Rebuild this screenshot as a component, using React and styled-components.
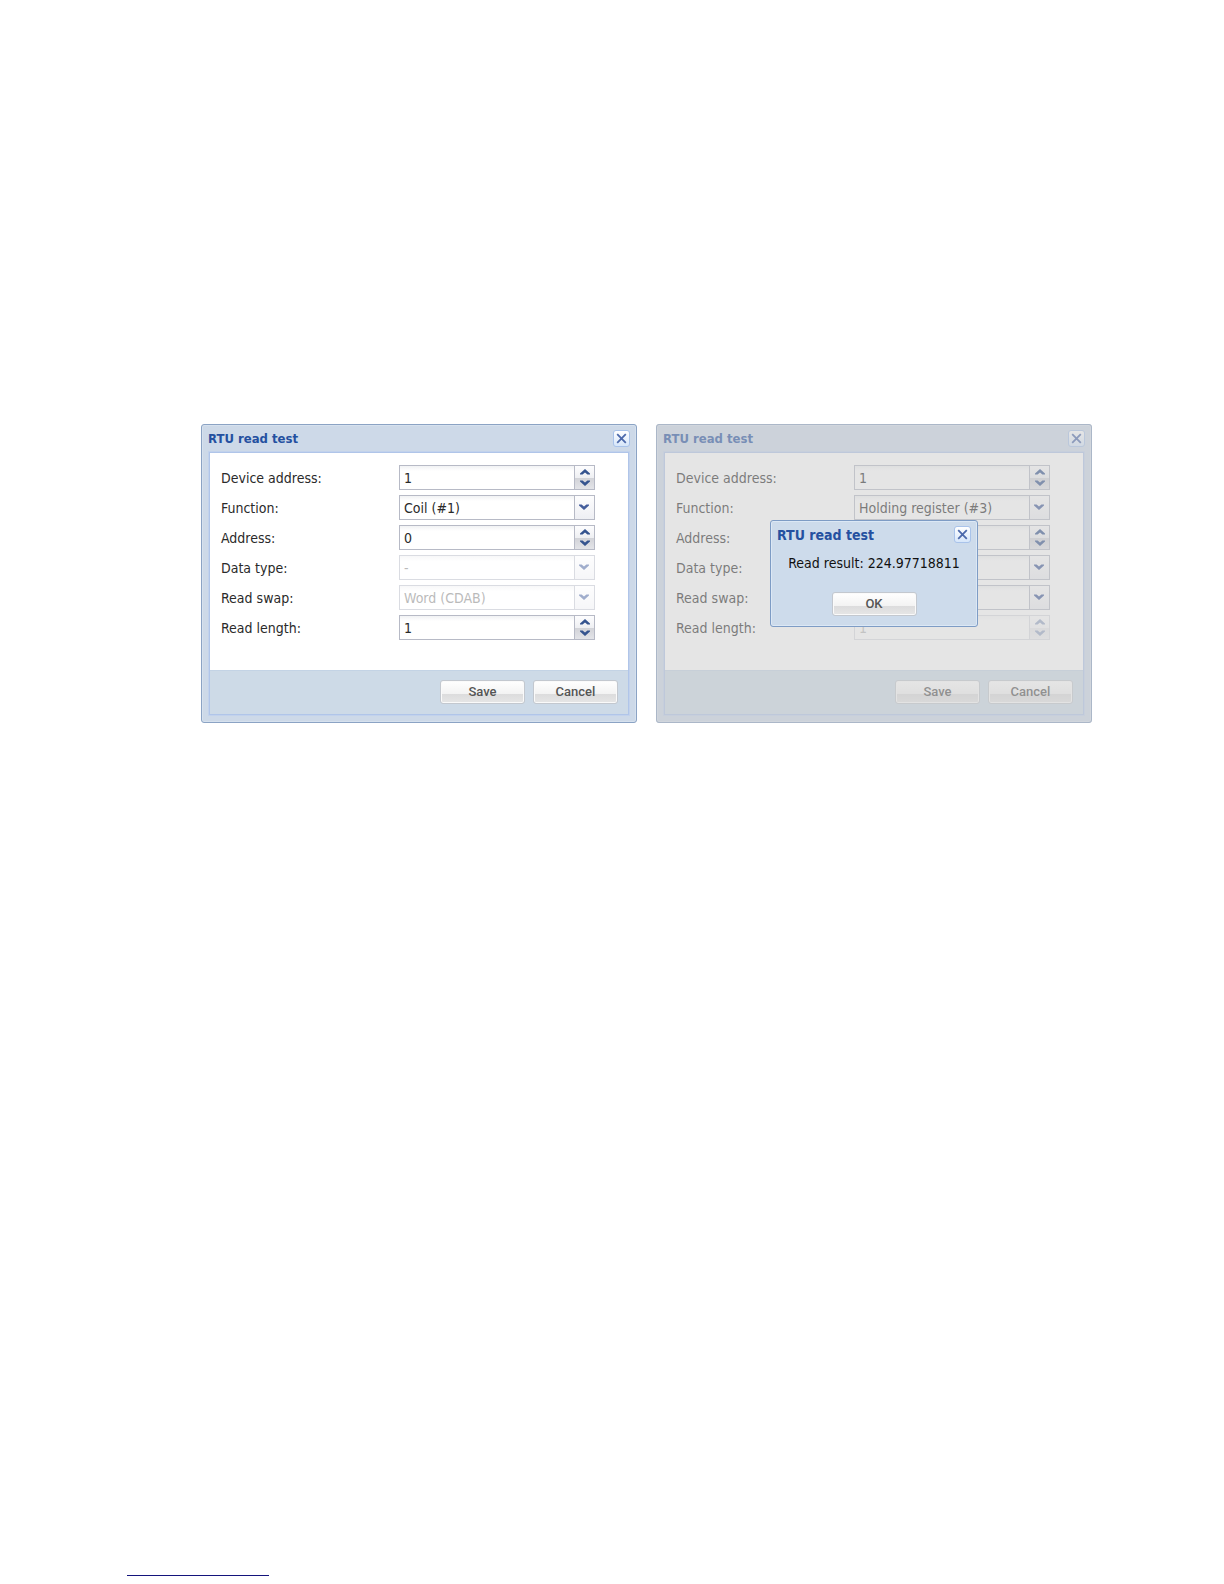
import React, { useId, useState } from "react";
import styled, { createGlobalStyle, css } from "styled-components";

const uiFont = '"DejaVu Sans Condensed", "DejaVu Sans", Tahoma, sans-serif';

const GlobalStyle = createGlobalStyle`
  *, *::before, *::after { box-sizing: border-box; }
  body { margin: 0; background: #fff; }
  button, input, select { margin: 0; font: inherit; }
`;

const Page = styled.div`
  min-height: 100vh;
  display: flex;
  flex-direction: column;
  font-family: ${uiFont};
  font-size: 14px;
  color: #2a2a2a;
`;

const Windows = styled.main`
  flex: 1;
  display: grid;
  grid-template-columns: 1fr 1fr;
  align-items: start;
  gap: 19px;
  padding: 424px 132px 48px 201px;

  @media (max-width: 1000px) {
    grid-template-columns: minmax(0, 436px);
    padding: 48px 24px;
  }
`;

const Footer = styled.footer`
  padding: 0 127px 8px;
`;

const FootRule = styled.hr`
  width: 142px;
  height: 1px;
  margin: 0;
  border: 0;
  background: #14147c;
`;

const Frame = styled.section`
  position: relative;
  padding: 0 7px 7px;
  border: 1px solid #8ba3c4;
  border-radius: 3px;
  background: #cdd9e8;
  box-shadow: inset 0 0 0 1px #d6e1ee;
`;

const TitleBar = styled.header`
  display: flex;
  align-items: center;
  justify-content: space-between;
  height: 27px;
  margin: 0 -1px;
`;

const Title = styled.h2`
  margin: 0;
  color: #2450a0;
  font-size: ${(p) => (p.$large ? "14px" : "13px")};
  line-height: 20px;
  font-weight: 700;
`;

const CloseButton = styled.button`
  display: flex;
  align-items: center;
  justify-content: center;
  width: 17px;
  height: 17px;
  padding: 0;
  border: 1px solid #a9c3ea;
  border-radius: 3px;
  background: linear-gradient(#fff, #d6e6fa);
  color: #4c69ab;
`;

const Panel = styled.form`
  border: 1px solid #b0c5e9;
  box-shadow: 0 0 0 1px #c2d2ec;
  background: #fff;
`;

const Fields = styled.div`
  display: flex;
  flex-direction: column;
  gap: 5px;
  padding: 12px 33px 30px 11px;
`;

const Row = styled.div`
  display: grid;
  grid-template-columns: 178px minmax(0, 1fr);
  align-items: center;
`;

const Label = styled.label`
  line-height: 24px;
`;

const Control = styled.div`
  position: relative;
  display: flex;
  height: 25px;
  border: 1px solid #b7bac6;
  background: linear-gradient(#f1f2f4, #fff 5px);
  opacity: ${(p) => (p.$disabled ? 0.5 : 1)};
`;

const entry = css`
  flex: 1;
  width: 100%;
  min-width: 0;
  padding: 0 4px;
  border: 0;
  border-radius: 0;
  background: transparent;
  color: ${(p) => (p.disabled ? "#777" : "#2a2a2a")};
  opacity: 1;
  appearance: none;
`;

const TextBox = styled.input`
  ${entry}
`;

const DropDown = styled.select`
  ${entry}
  padding-right: 24px;
`;

const Trigger = styled.span`
  position: absolute;
  inset: 0 0 0 auto;
  display: flex;
  align-items: center;
  justify-content: center;
  width: 20px;
  padding: 0 2px 2px 0;
  border-left: 1px solid #b7bac6;
  background: linear-gradient(#fdfdfe, #eeeff3);
  color: #435d9b;
  pointer-events: none;
`;

const Spinner = styled.span`
  display: flex;
  flex-direction: column;
  width: 20px;
  border-left: 1px solid #b7bac6;
`;

const StepButton = styled.button`
  flex: 1;
  display: flex;
  align-items: center;
  justify-content: center;
  padding: 0;
  border: 0;
  background: ${(p) => (p.$down ? "linear-gradient(#d2d3d8, #e3e4e8)" : "linear-gradient(#fdfdfe, #eeeff2)")};
  color: #35548f;
`;

const Toolbar = styled.footer`
  display: flex;
  justify-content: flex-end;
  gap: 8px;
  padding: 9px 10px 10px;
  border-top: 1px solid #c3d3e5;
  background: #cddae7;
`;

const PushButton = styled.button`
  width: 85px;
  height: 24px;
  padding: 0;
  border: 1px solid #c3c8cf;
  border-radius: 3px;
  background: linear-gradient(#fff, #f3f3f3 58%, #dcdcdd 60%, #e6e6e6);
  box-shadow: inset 0 0 0 1px #fafafa;
  color: #555;
  font-family: Roboto, "Liberation Sans", sans-serif;
  font-size: 13px;
  font-weight: 500;
  line-height: 20px;
`;

const Mask = styled.div`
  position: absolute;
  inset: -1px;
  display: grid;
  place-items: center;
  border-radius: 3px;
  background: rgba(204, 204, 204, 0.5);
`;

const MessageBox = styled.section`
  width: 208px;
  height: 107px;
  padding: 0 7px 10px;
  border: 1px solid #7e9cc5;
  border-radius: 3px;
  background: #cddbeb;
  box-shadow: inset 0 0 0 1px #dce8f5;
`;

const Message = styled.p`
  margin: 0;
  padding: 5px 0 19px;
  color: #111;
  line-height: 20px;
  text-align: center;
`;

const MessageActions = styled.div`
  display: flex;
  justify-content: center;
`;

function CloseIcon() {
  return (
    <svg width="11" height="11" viewBox="0 0 11 11" aria-hidden="true">
      <path d="M1.2 1.2 9.8 9.8M9.8 1.2 1.2 9.8" fill="none" stroke="currentColor" strokeWidth="1.8" />
    </svg>
  );
}

function Chevron({ up }) {
  return (
    <svg width="10" height="6" viewBox="0 0 10 6" aria-hidden="true">
      <path
        d={up ? "M5 0 10 4.4V5.6H7.4L5 3.4 2.6 5.6H0V4.4Z" : "M5 6 10 1.6V.4H7.4L5 2.6 2.6.4H0V1.6Z"}
        fill="currentColor"
      />
    </svg>
  );
}

function NumberField({ label, value, disabled }) {
  const id = useId();
  const [current, setCurrent] = useState(value);
  const step = (by) => setCurrent(String(Number(current) + by));
  return (
    <Row>
      <Label htmlFor={id}>{label}</Label>
      <Control $disabled={disabled}>
        <TextBox id={id} inputMode="numeric" value={current} disabled={disabled} onChange={(e) => setCurrent(e.target.value)} />
        <Spinner>
          <StepButton type="button" aria-label={`Increase ${label}`} disabled={disabled} onClick={() => step(1)}>
            <Chevron up />
          </StepButton>
          <StepButton type="button" $down aria-label={`Decrease ${label}`} disabled={disabled} onClick={() => step(-1)}>
            <Chevron />
          </StepButton>
        </Spinner>
      </Control>
    </Row>
  );
}

function SelectField({ label, value, disabled }) {
  const id = useId();
  return (
    <Row>
      <Label htmlFor={id}>{label}</Label>
      <Control $disabled={disabled}>
        <DropDown id={id} disabled={disabled} defaultValue={value}>
          <option value={value}>{value}</option>
        </DropDown>
        <Trigger><Chevron /></Trigger>
      </Control>
    </Row>
  );
}

const initialFields = [
  { label: "Device address:", kind: "number", value: "1" },
  { label: "Function:", kind: "select", value: "Coil (#1)" },
  { label: "Address:", kind: "number", value: "0" },
  { label: "Data type:", kind: "select", value: "-", disabled: true },
  { label: "Read swap:", kind: "select", value: "Word (CDAB)", disabled: true },
  { label: "Read length:", kind: "number", value: "1" },
];

const resultFields = [
  { label: "Device address:", kind: "number", value: "1" },
  { label: "Function:", kind: "select", value: "Holding register (#3)" },
  { label: "Address:", kind: "number", value: "" },
  { label: "Data type:", kind: "select", value: "" },
  { label: "Read swap:", kind: "select", value: "" },
  { label: "Read length:", kind: "number", value: "1", disabled: true },
];

function ReadTestWindow({ fields, children }) {
  return (
    <Frame>
      <TitleBar>
        <Title>RTU read test</Title>
        <CloseButton type="button" aria-label="Close"><CloseIcon /></CloseButton>
      </TitleBar>
      <Panel onSubmit={(e) => e.preventDefault()}>
        <Fields>
          {fields.map(({ kind, ...field }) =>
            kind === "number" ? <NumberField key={field.label} {...field} /> : <SelectField key={field.label} {...field} />
          )}
        </Fields>
        <Toolbar>
          <PushButton type="submit">Save</PushButton>
          <PushButton type="button">Cancel</PushButton>
        </Toolbar>
      </Panel>
      {children}
    </Frame>
  );
}

export default function App() {
  return (
    <Page>
      <GlobalStyle />
      <Windows>
        <ReadTestWindow fields={initialFields} />
        <ReadTestWindow fields={resultFields}>
          <Mask>
            <MessageBox role="alertdialog" aria-label="RTU read test">
              <TitleBar>
                <Title $large>RTU read test</Title>
                <CloseButton type="button" aria-label="Close"><CloseIcon /></CloseButton>
              </TitleBar>
              <Message>Read result: 224.97718811</Message>
              <MessageActions>
                <PushButton type="button">OK</PushButton>
              </MessageActions>
            </MessageBox>
          </Mask>
        </ReadTestWindow>
      </Windows>
      <Footer>
        <FootRule />
      </Footer>
    </Page>
  );
}
